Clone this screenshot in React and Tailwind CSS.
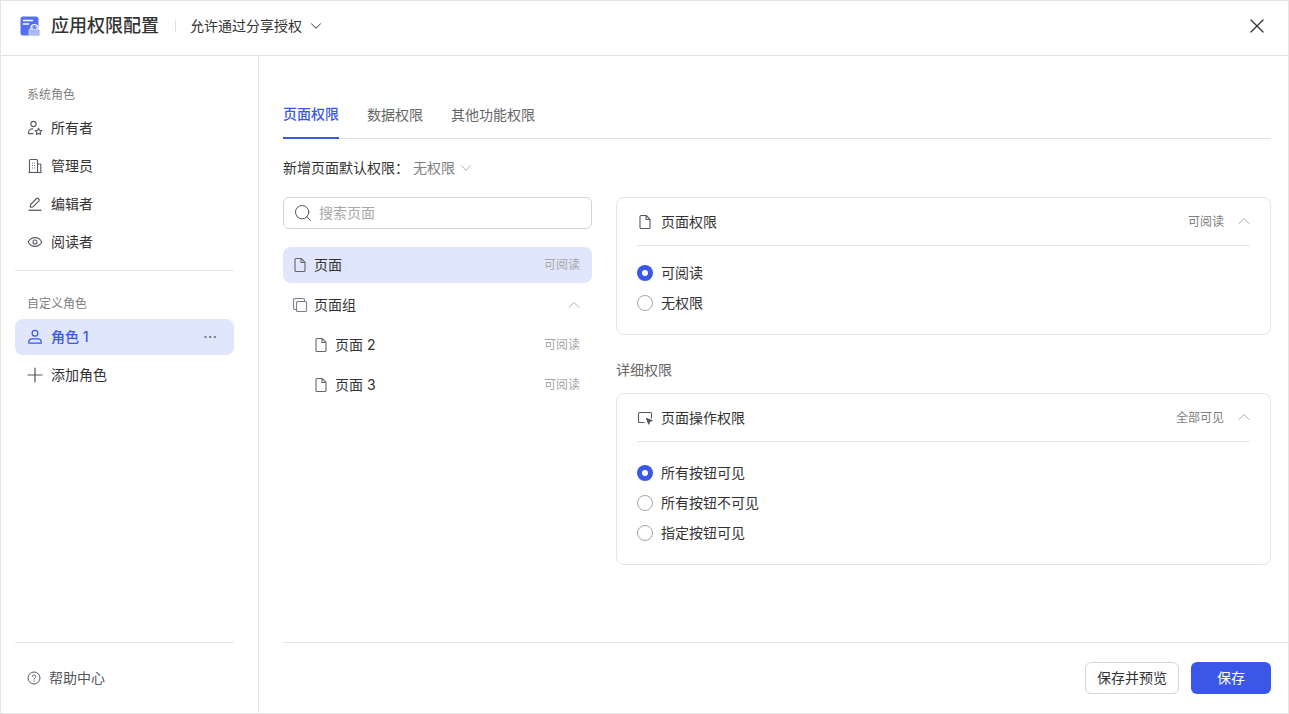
import React from "react";
import { ChevronDown, ChevronUp, X, Search, Plus, Ellipsis } from "lucide-react";

const FONT = "[font-family:Inter,'Noto_Sans_CJK_SC',sans-serif]";

const FileIcon = ({ className = "" }) => (
  <svg viewBox="0 0 16 16" fill="none" stroke="currentColor" strokeWidth="1.1" className={`w-4 h-4 shrink-0 ${className}`}>
    <path d="M3 2.5a1 1 0 0 1 1-1h5.2L13 5.3v8.2a1 1 0 0 1-1 1H4a1 1 0 0 1-1-1z" strokeLinejoin="round" />
    <path d="M9 1.6v3.9h4" strokeLinejoin="round" />
  </svg>
);

const OwnerIcon = () => (
  <svg viewBox="0 0 16 16" fill="none" stroke="#555a66" strokeWidth="1.1" className="w-4 h-4 shrink-0">
    <circle cx="6.5" cy="4" r="2.6" />
    <path d="M1.5 13.5v-1.2c0-2 2-3.4 4.3-3.4" strokeLinecap="round" />
    <path d="M1.5 13.6h4.5" strokeLinecap="round" />
    <path d="M11.5 8.2l1.1 2 2.2.4-1.6 1.6.4 2.2-2.1-1-2.1 1 .4-2.2-1.6-1.6 2.2-.4z" strokeLinejoin="round" />
  </svg>
);

const BuildingIcon = () => (
  <svg viewBox="0 0 16 16" fill="none" stroke="#555a66" strokeWidth="1.1" className="w-4 h-4 shrink-0">
    <path d="M2.5 14.5v-12a1 1 0 0 1 1-1h6a1 1 0 0 1 1 1v12z" />
    <path d="M10.5 6h2.5a.8.8 0 0 1 .8.8v7.7h-3.3" />
    <path d="M5 5h.9M7.2 5h.9M5 7.5h.9M7.2 7.5h.9M5 10h.9M7.2 10h.9" />
    <path d="M1.5 14.5h13" />
  </svg>
);

const PenIcon = () => (
  <svg viewBox="0 0 16 16" fill="none" stroke="#555a66" strokeWidth="1.1" className="w-4 h-4 shrink-0">
    <path d="M3.2 11.2l.4-2.7 6-6a1 1 0 0 1 1.4 0l1 1a1 1 0 0 1 0 1.4l-6 6z" strokeLinejoin="round" />
    <path d="M1.5 14.3h13" strokeWidth="1.3" />
  </svg>
);

const EyeIcon = () => (
  <svg viewBox="0 0 16 16" fill="none" stroke="#555a66" strokeWidth="1.1" className="w-4 h-4 shrink-0">
    <path d="M1.2 8C2.6 5.2 5 3.6 8 3.6s5.4 1.6 6.8 4.4c-1.4 2.8-3.8 4.4-6.8 4.4S2.6 10.8 1.2 8z" strokeLinejoin="round" />
    <circle cx="8" cy="8" r="2" />
  </svg>
);

const UserIcon = () => (
  <svg viewBox="0 0 16 16" fill="none" stroke="#3b57e8" strokeWidth="1.25" className="w-4 h-4 shrink-0">
    <circle cx="8" cy="4.3" r="2.9" />
    <path d="M1.8 14.2v-1.3c0-1.8 1.5-3 3.3-3h5.800c1.800 0 3.300 1.200 3.300 3v1.300z" strokeLinejoin="round" />
  </svg>
);

const HelpIcon = () => (
  <svg viewBox="0 0 14 14" fill="none" stroke="#555a66" strokeWidth="1" className="w-[14px] h-[14px] shrink-0">
    <circle cx="7" cy="7" r="6" />
    <path d="M5.4 5.5a1.600 1.600 0 1 1 2.500 1.300c-.6.400-.9.700-.9 1.400" strokeLinecap="round" />
    <path d="M7 9.900v.5" strokeLinecap="round" />
  </svg>
);

const CopyIcon = () => (
  <svg viewBox="0 0 16 16" fill="none" stroke="#7a7f8a" strokeWidth="1.1" className="w-4 h-4 shrink-0">
    <rect x="4.5" y="4.5" width="10" height="10" rx="1" />
    <path d="M4.5 12.5H3A1.500 1.500 0 0 1 1.500 11V3A1.500 1.500 0 0 1 3 1.500h8A1.500 1.500 0 0 1 12.500 3v1.500" />
  </svg>
);

const ActionIcon = () => (
  <svg viewBox="0 0 16 16" fill="none" stroke="#555a66" strokeWidth="1.1" className="w-4 h-4 shrink-0">
    <path d="M7.500 12.500H2.500a1 1 0 0 1-1-1V3.500a1 1 0 0 1 1-1h11a1 1 0 0 1 1 1v5" />
    <path d="M9.500 8.500l5.500 2-2.300 1-1 2.500z" fill="#555a66" strokeLinejoin="round" />
  </svg>
);

const Logo = () => (
  <svg viewBox="0 0 20 20" className="w-5 h-5 shrink-0">
    <rect x="0.5" y="0.5" width="18" height="19" rx="2.5" fill="#5470f0" />
    <path d="M3.500 4.500h9" stroke="#fff" strokeWidth="1.5" strokeLinecap="round" />
    <path d="M3.500 8h5" stroke="#fff" strokeWidth="1.5" strokeLinecap="round" />
    <path d="M11 14v-2a3.500 3.500 0 0 1 7 0v2" fill="#5470f0" stroke="#fff" strokeWidth="1.2" />
    <path d="M12.500 14v-2a2 2 0 0 1 4 0v2" fill="none" stroke="#a9b8f6" strokeWidth="1.200" />
    <rect x="9" y="13" width="11" height="7" rx="1.5" fill="#a9b8f6" stroke="#fff" strokeWidth="0.6" />
  </svg>
);

const Radio = ({ checked, label }) => (
  <div className="flex items-center gap-2 h-[30px]">
    {checked ? (
      <span className="w-4 h-4 rounded-full bg-[#3b57e8] flex items-center justify-center shrink-0">
        <span className="w-1.5 h-1.5 rounded-full bg-white" />
      </span>
    ) : (
      <span className="w-4 h-4 rounded-full border border-[#a3a6ad] bg-white shrink-0" />
    )}
    <span className="text-sm text-[#333]">{label}</span>
  </div>
);

const Card = ({ icon, title, status, options, bodyClass }) => (
  <div className="border border-[#e5e5e5] rounded-lg px-5">
    <div className="flex items-center h-12 gap-2 border-b border-[#e5e5e5] text-[#555a66]">
      {icon}
      <span className="text-sm text-[#333] flex-1">{title}</span>
      <span className="text-xs text-[#808080]">{status}</span>
      <ChevronUp className="w-5 h-5 ml-0.5 -mr-1 -mt-0.5 text-[#a0a0a0]" strokeWidth={1.1} />
    </div>
    <div className={bodyClass}>
      {options.map((o) => (
        <Radio key={o.label} {...o} />
      ))}
    </div>
  </div>
);

const SideItem = ({ icon, label, className = "" }) => (
  <div className={`flex items-center gap-2 h-[38px] pl-3 text-sm text-[#333] ${className}`}>
    {icon}
    <span>{label}</span>
  </div>
);

const PageRow = ({ icon, label, status, active, indent }) => (
  <div className={`flex items-center h-9 rounded-lg pr-3 gap-1.5 ${indent ? "pl-[30px]" : "pl-[9px]"} ${active ? "bg-[#e0e6fb]" : ""}`}>
    {icon}
    <span className="text-sm text-[#333] flex-1">{label}</span>
    {status}
  </div>
);

const ReadTag = () => <span className="text-xs text-[#a8a8a8]">可阅读</span>;

export default function App() {
  return (
    <div className={`w-[1289px] h-[714px] bg-white flex flex-col border border-[#e5e5e5] overflow-hidden ${FONT}`}>
      <header className="h-[55px] shrink-0 flex items-center border-b border-[#e0e0e0] pl-[19px] pr-[19px] pb-[5px]">
        <Logo />
        <h1 className="text-[18px] font-medium text-[#333] ml-[11px]">应用权限配置</h1>
        <span className="w-px h-3 bg-[#e0e0e0] ml-4" />
        <span className="text-sm text-[#333] ml-[14px]">允许通过分享授权</span>
        <ChevronDown className="w-[18px] h-[18px] ml-[5px] text-[#555]" strokeWidth={1.4} />
        <X className="w-6 h-6 ml-auto text-[#333]" strokeWidth={1.3} />
      </header>

      <div className="flex-1 flex min-h-0">
        <aside className="w-[258px] shrink-0 border-r border-[#e5e5e5] pl-[14px] pr-[24px] flex flex-col">
          <div className="text-xs text-[#808080] pl-3 pt-[31px] leading-4">系统角色</div>
          <div className="mt-1.5">
            <SideItem icon={<OwnerIcon />} label="所有者" />
            <SideItem icon={<BuildingIcon />} label="管理员" />
            <SideItem icon={<PenIcon />} label="编辑者" />
            <SideItem icon={<EyeIcon />} label="阅读者" />
          </div>
          <div className="h-px bg-[#e5e5e5] mt-[9px]" />
          <div className="text-xs text-[#808080] pl-3 mt-[25px] leading-4">自定义角色</div>
          <div className="flex items-center gap-2 h-9 rounded-lg bg-[#e0e6fb] pl-3 pr-4 mt-[7px] text-sm text-[#3b57e8] font-medium">
            <UserIcon />
            <span className="flex-1">角色 1</span>
            <Ellipsis className="w-4 h-4 text-[#666]" strokeWidth={1.4} />
          </div>
          <SideItem className="mt-px" icon={<Plus className="w-6 h-6 -mx-1 text-[#555]" strokeWidth={1.2} />} label="添加角色" />
          <div className="mt-auto border-t border-[#e5e5e5] h-[71px] pl-3 flex items-center gap-2 text-sm text-[#555]">
            <HelpIcon />
            <span>帮助中心</span>
          </div>
        </aside>

        <main className="flex-1 min-w-0 flex flex-col">
          <div className="flex-1 min-h-0 pl-6 pr-[17px] pt-[37px]">
            <div className="flex gap-7 border-b border-[#e0e0e0] h-[46px] text-sm text-[#666]">
              <div className="h-[46px] flex items-center pb-0.5 border-b-2 border-[#3b57e8] text-[#3b57e8] font-medium">页面权限</div>
              <div className="h-[46px] flex items-center pb-0.5">数据权限</div>
              <div className="h-[46px] flex items-center pb-0.5">其他功能权限</div>
            </div>
            <div className="flex items-center h-5 mt-[19px] text-sm">
              <span className="text-[#333]">新增页面默认权限：</span>
              <span className="text-[#808080] ml-1">无权限</span>
              <ChevronDown className="w-[18px] h-[18px] ml-0.5 text-[#9a9a9a]" strokeWidth={1.1} />
            </div>
            <div className="flex gap-6 mt-[19px]">
              <div className="w-[309px] shrink-0">
                <div className="h-8 border border-[#d4d4d4] rounded-md flex items-center pl-[9px] gap-1.5 text-sm text-[#a8a8a8]">
                  <Search className="w-5 h-5 text-[#555]" strokeWidth={1.2} />
                  <span>搜索页面</span>
                </div>
                <div className="flex flex-col gap-1 mt-[18px]">
                  <PageRow active icon={<FileIcon className="text-[#666]" />} label="页面" status={<ReadTag />} />
                  <PageRow icon={<CopyIcon />} label="页面组" status={<ChevronUp className="w-5 h-5 -mr-1 text-[#a8a8a8]" strokeWidth={1.1} />} />
                  <PageRow indent icon={<FileIcon className="text-[#666]" />} label="页面 2" status={<ReadTag />} />
                  <PageRow indent icon={<FileIcon className="text-[#666]" />} label="页面 3" status={<ReadTag />} />
                </div>
              </div>
              <div className="flex-1 min-w-0">
                <Card
                  icon={<FileIcon />}
                  title="页面权限"
                  status="可阅读"
                  bodyClass="pt-3 pb-4"
                  options={[{ checked: true, label: "可阅读" }, { label: "无权限" }]}
                />
                <div className="text-sm text-[#666] leading-5 mt-[25px] mb-[13px]">详细权限</div>
                <Card
                  icon={<ActionIcon />}
                  title="页面操作权限"
                  status="全部可见"
                  bodyClass="pt-4 pb-4"
                  options={[{ checked: true, label: "所有按钮可见" }, { label: "所有按钮不可见" }, { label: "指定按钮可见" }]}
                />
              </div>
            </div>
          </div>
          <footer className="ml-6 h-[71px] shrink-0 border-t border-[#e5e5e5] flex items-center justify-end gap-3 pr-[17px] pb-px">
            <button className="h-8 px-[11px] border border-[#d4d4d4] rounded-md text-sm text-[#333] bg-white">保存并预览</button>
            <button className="h-8 w-20 rounded-md text-sm text-white bg-[#3b57e8]">保存</button>
          </footer>
        </main>
      </div>
    </div>
  );
}
